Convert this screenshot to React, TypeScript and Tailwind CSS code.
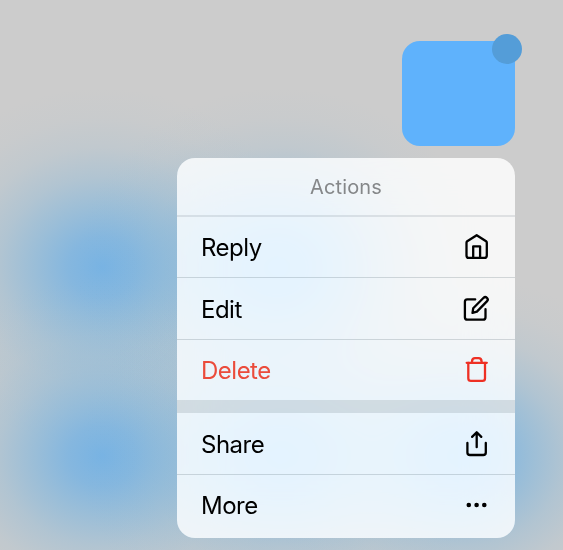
import type { ReactNode } from "react";

const Icon = ({ children }: { children: ReactNode }) => (
  <svg
    width="30"
    height="30"
    viewBox="0 0 30 30"
    fill="none"
    stroke="currentColor"
    strokeWidth="2.3"
    strokeLinecap="round"
    strokeLinejoin="round"
    className="shrink-0"
  >
    {children}
  </svg>
);

const HomeIcon = () => (
  <Icon>
    <path d="M14.7 3.2 5.2 9.3Q4.5 9.8 4.5 10.8V23.4Q4.5 25.9 6.9 25.9H22.3Q24.8 25.9 24.8 23.4V10.8Q24.8 9.8 24.1 9.3Z" />
    <path d="M11.2 25.5V14.3H18.1V25.5" />
  </Icon>
);

const EditIcon = () => (
  <Icon>
    <path d="M13.2 5.4H5.3Q2.9 5.4 2.9 7.8V23.2Q2.9 25.7 5.4 25.7H21Q23.5 25.7 23.5 23.2V15.2" />
    <path d="M10.5 18.9 11.2 14.3 21.6 3.8Q23.2 2.3 24.9 3.8Q26.6 5.5 25.1 7.1L14.9 17.6Z" />
  </Icon>
);

const TrashIcon = () => (
  <Icon>
    <path d="M4.7 7.8H24.8M10 7.6V6.3Q10.3 3.2 13 3.2H16.6Q19.3 3.2 19.6 6.3V7.6" />
    <path d="M6.3 8V23.2Q6.3 25.9 9 25.9H20.4Q23 25.9 23 23.2V8" />
  </Icon>
);

const ShareIcon = () => (
  <Icon>
    <path d="M14.7 18.2V3.4M10.1 7.9 14.7 3.2 19.3 7.9" />
    <path d="M5.4 14V23.4Q5.4 26 8 26H21.2Q23.8 26 23.8 23.4V14" />
  </Icon>
);

const MoreIcon = () => (
  <Icon>
    <g fill="currentColor" stroke="none">
      <circle cx="6.8" cy="13" r="2.3" />
      <circle cx="14.6" cy="13" r="2.3" />
      <circle cx="22.3" cy="13" r="2.3" />
    </g>
  </Icon>
);

const Row = ({ label, className, children }: { label: string; className: string; children: ReactNode }) => (
  <div className={"flex items-center justify-between pr-[23px] pl-6 " + className}>
    <span className="text-[24px] leading-[30px] tracking-[-0.5px]">{label}</span>
    {children}
  </div>
);

// Soft elliptical falloff of a defocused tile
const Glow = ({ className }: { className: string }) => (
  <div
    className={
      "absolute h-[360px] w-[410px] bg-[radial-gradient(closest-side,rgb(120_179_227),rgb(120_179_226/0.84)_16.7%,rgb(120_180_224/0.58)_33.3%,rgb(120_180_222/0.32)_50%,rgb(120_180_220/0.135)_66.7%,rgb(120_180_220/0.04)_83.3%,rgb(120_180_220/0))] " +
      className
    }
  />
);

export default function App() {
  return (
    <div className="relative h-[550px] w-[563px] overflow-hidden bg-[#ccc] font-['Inter','Liberation_Sans',sans-serif]">
      <Glow className="top-[87px] left-[-103px]" />
      <Glow className="top-[87px] left-[75px]" />
      <Glow className="top-[276px] left-[-103px]" />
      <Glow className="top-[276px] left-[77px]" />
      <Glow className="top-[276px] left-[257px]" />

      <div className="relative flex flex-col items-end gap-3 pt-[41px] pr-12">
        <div className="relative h-[105px] w-[113px] rounded-[18px] bg-[#5fb2fc]">
          <div className="absolute -top-[7px] -right-[7px] size-[30px] rounded-full bg-[#549dd8]" />
        </div>

        <div className="h-[380px] w-[338px] overflow-hidden rounded-[18px] bg-white/82 text-black backdrop-blur-[24px] backdrop-saturate-[1.6]">
          <div className="flex h-[59px] items-center justify-center border-b-2 border-[#3c505a]/13 text-[20px] tracking-[0.15px] text-[#858789]">
            Actions
          </div>
          <Row label="Reply" className="h-[61px] border-b-[1.5px] border-[#3c505a]/20 [&>span]:pt-0.5">
            <HomeIcon />
          </Row>
          <Row label="Edit" className="h-[62px] border-b-[1.5px] border-[#3c505a]/20 [&>span]:pt-0.5">
            <EditIcon />
          </Row>
          <Row label="Delete" className="h-[60px] text-[#eb4b3b] [&>span]:pt-0.5 [&>svg]:text-[#ee3024]">
            <TrashIcon />
          </Row>
          <div className="h-[13px] bg-[#3c505a]/15" />
          <Row label="Share" className="h-[62px] border-b-[1.5px] border-[#3c505a]/20 [&>span]:pt-0.5">
            <ShareIcon />
          </Row>
          <Row label="More" className="h-[63px] [&>span]:pb-0.5">
            <MoreIcon />
          </Row>
        </div>
      </div>
    </div>
  );
}
